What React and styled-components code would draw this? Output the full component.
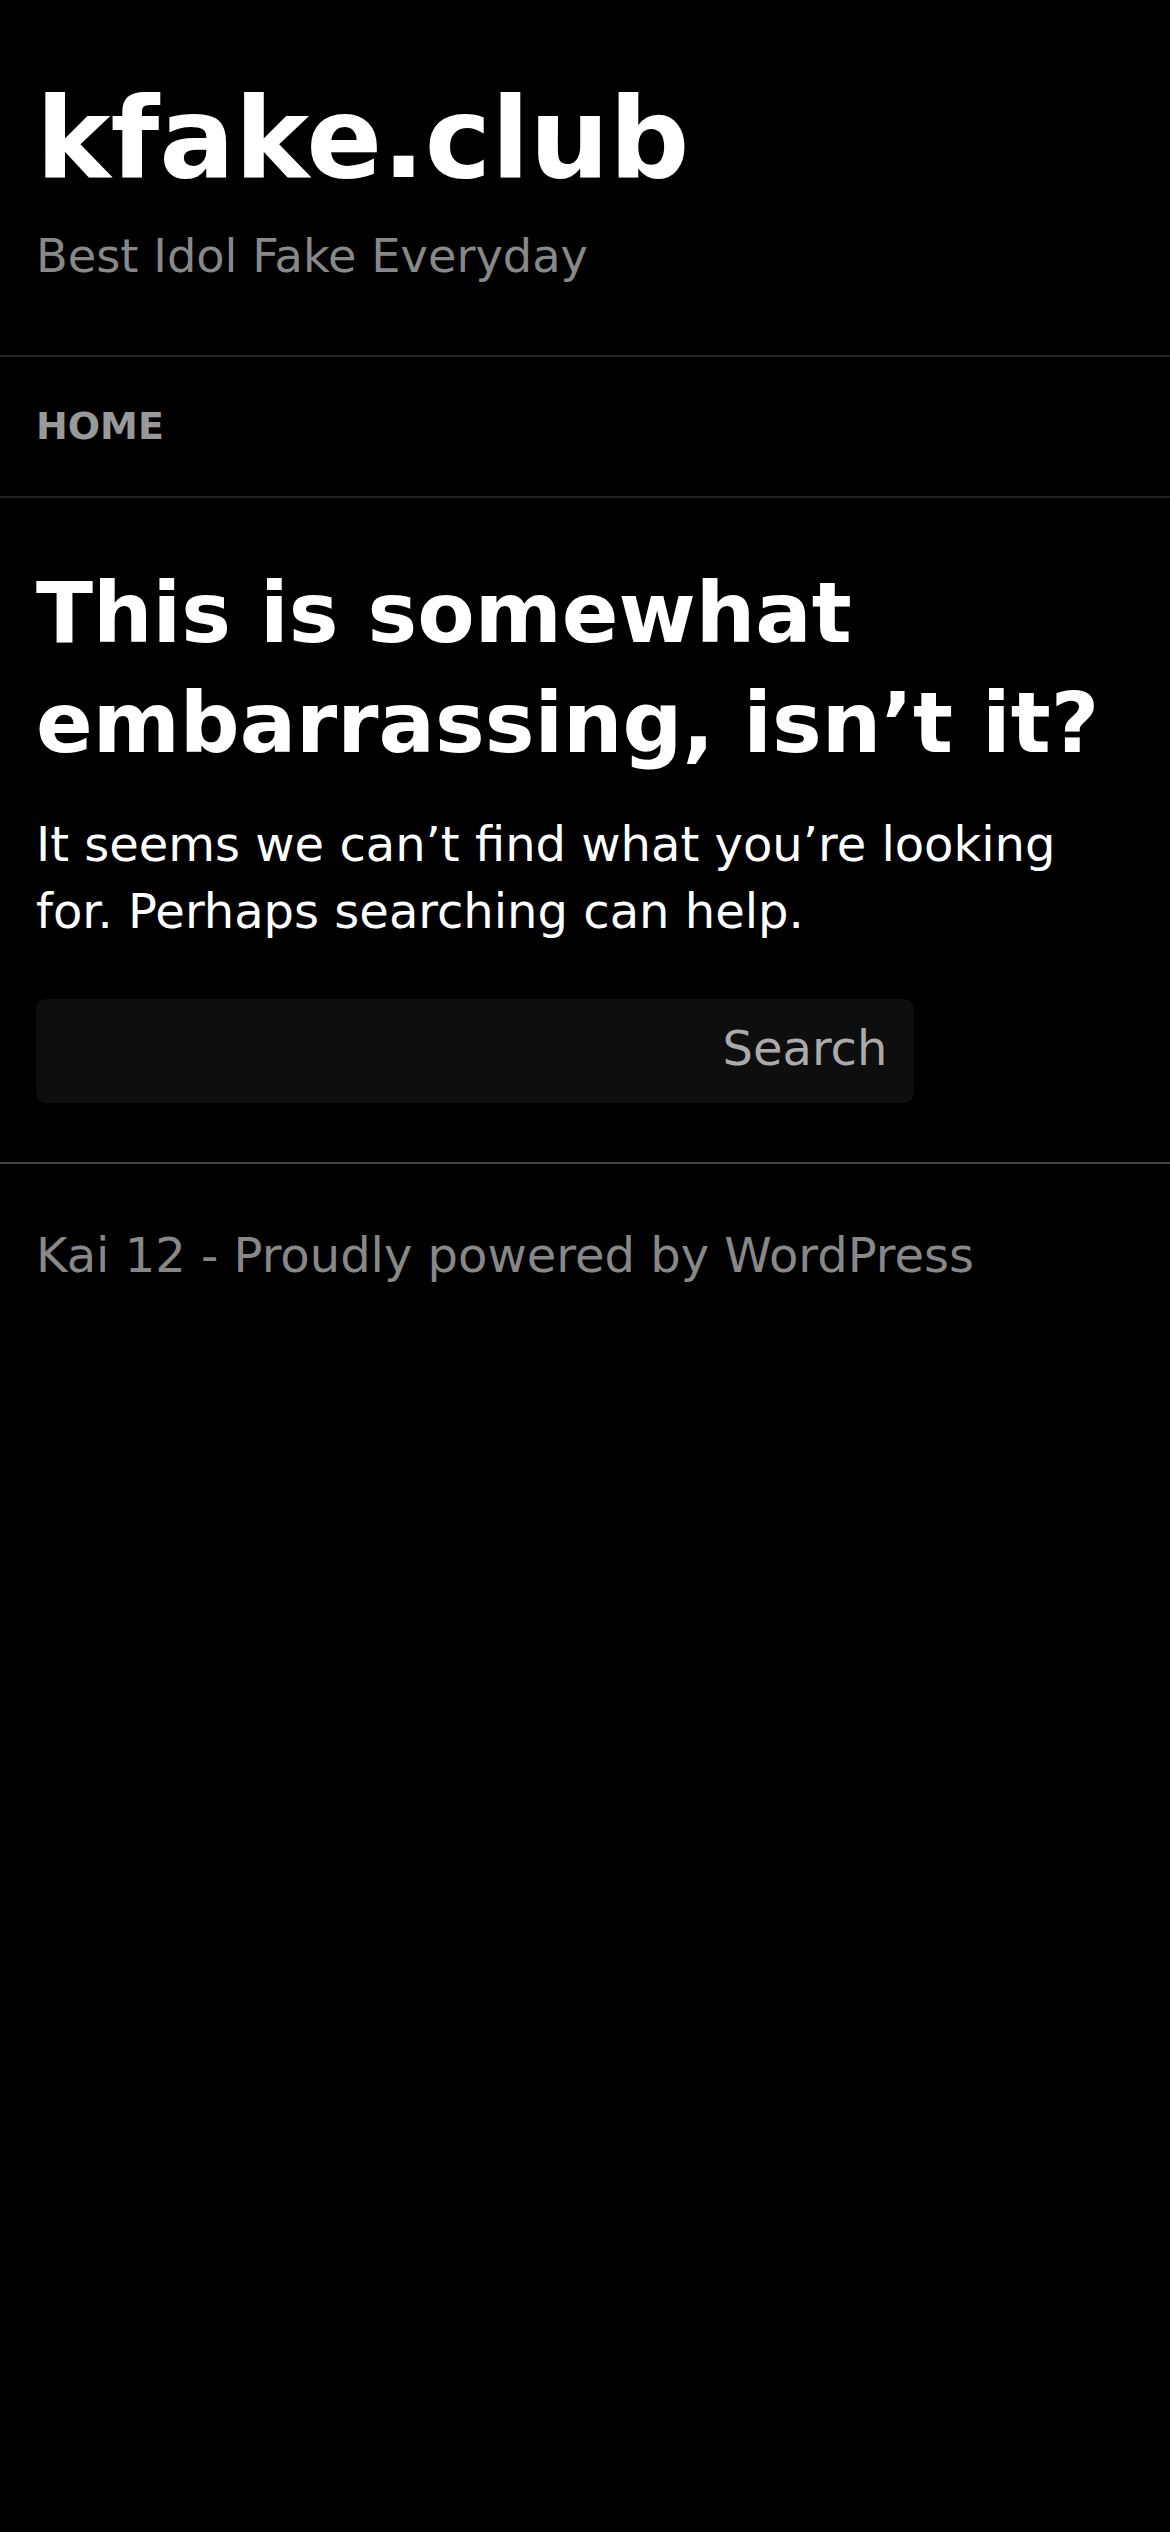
import React from 'react'
import styled, { createGlobalStyle } from 'styled-components'

const GlobalStyle = createGlobalStyle`
  html, body {
    margin: 0;
    padding: 0;
    background: #000;
  }
  body {
    font-family: 'DejaVu Sans', Verdana, sans-serif;
    color: #fff;
  }
`

const App = () => {
  return (
    <Page>
      <GlobalStyle />
      <Header>
        <SiteTitle>kfake.club</SiteTitle>
        <Tagline>Best Idol Fake Everyday</Tagline>
      </Header>

      <Nav>
        <NavLink href='#'>Home</NavLink>
      </Nav>

      <Main>
        <Heading>This is somewhat embarrassing, isn’t it?</Heading>
        <Text>
          It seems we can’t find what you’re looking for. Perhaps searching can
          help.
        </Text>
        <SearchForm onSubmit={(e) => e.preventDefault()}>
          <SearchInput type='search' aria-label='Search' />
          <SearchButton type='submit'>Search</SearchButton>
        </SearchForm>
      </Main>

      <Footer>
        <FooterText>Kai 12 - Proudly powered by WordPress</FooterText>
      </Footer>
    </Page>
  )
}

export default App

const Page = styled.div`
  min-height: 2532px;
  background: #000;
`

const Header = styled.header`
  padding: 69px 36px 67px;
`

const SiteTitle = styled.h1`
  margin: 0;
  font-size: 112px;
  line-height: 138px;
  font-weight: bold;
  color: #fff;
`

const Tagline = styled.p`
  margin: 18px 0 0;
  font-size: 46.3px;
  line-height: 63px;
  color: #888;
`

const Nav = styled.nav`
  border-top: 2px solid #222;
  border-bottom: 2px solid #222;
  padding: 47px 36px 48px;
`

const NavLink = styled.a`
  display: block;
  font-size: 38px;
  line-height: 44px;
  font-weight: bold;
  text-transform: uppercase;
  text-decoration: none;
  color: #999;
`

const Main = styled.main`
  padding: 60px 36px 59px;
`

const Heading = styled.h2`
  margin: 0;
  font-size: 83.6px;
  line-height: 110px;
  font-weight: bold;
  color: #fff;
`

const Text = styled.p`
  margin: 33px 0 0;
  font-size: 48px;
  line-height: 67px;
  color: #fff;
`

const SearchForm = styled.form`
  margin-top: 54px;
  width: 80%;
  height: 104px;
  display: flex;
  align-items: center;
  background: #0e0e0e;
  border-radius: 10px;
  box-sizing: border-box;
  padding: 0 27px 0 36px;
`

const SearchInput = styled.input`
  flex: 1;
  min-width: 0;
  height: 100%;
  border: none;
  outline: none;
  background: transparent;
  color: #fff;
  font-family: inherit;
  font-size: 48px;
  -webkit-appearance: none;
`

const SearchButton = styled.button`
  border: none;
  background: transparent;
  padding: 0 0 6px;
  font-family: 'DejaVu Sans', Verdana, sans-serif;
  font-size: 48px;
  color: #aaa;
  cursor: pointer;
`

const Footer = styled.footer`
  border-top: 2px solid #444;
  padding: 58px 36px;
`

const FooterText = styled.p`
  margin: 0;
  font-size: 48px;
  line-height: 67px;
  color: #888;
`
